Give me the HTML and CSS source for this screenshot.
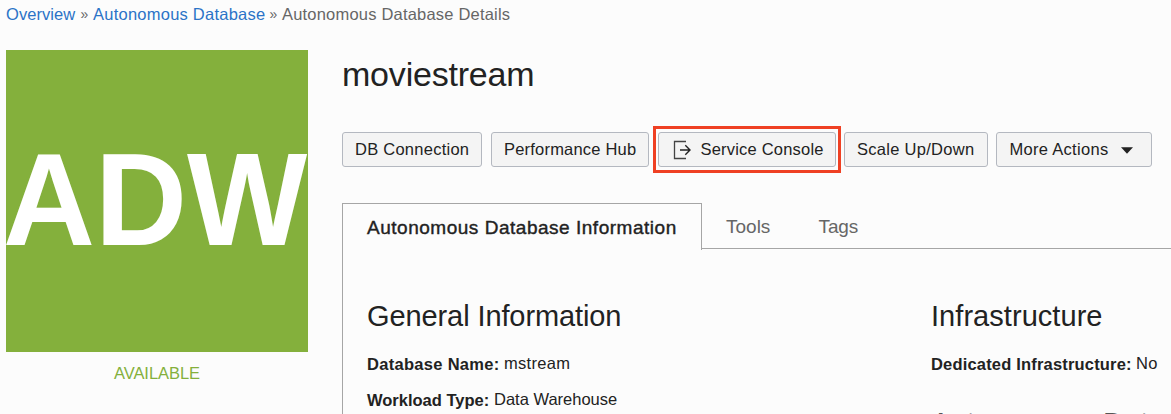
FILE: index.html
```html
<!DOCTYPE html>
<html lang="en">
<head>
<meta charset="utf-8">
<title>Autonomous Database Details</title>
<link rel="stylesheet" href="styles.css">
</head>
<body>
<nav class="breadcrumb">
  <a class="crumb-overview">Overview</a><span class="sep">»</span><a class="crumb-adb">Autonomous Database</a><span class="sep">»</span><span class="crumb-current">Autonomous Database Details</span>
</nav>
<div class="page">
  <aside class="resource">
    <div class="tile"><span class="tile-text">ADW</span></div>
    <div class="status">AVAILABLE</div>
  </aside>
  <main class="content">
    <h1 class="title">moviestream</h1>
    <div class="actions">
      <button class="btn btn-connection">DB Connection</button>
      <button class="btn btn-hub">Performance Hub</button>
      <button class="btn btn-console">
        <svg class="exit-icon" width="18" height="20" viewBox="0 0 18 20"><path d="M13 1.5H1.5v17H13" fill="none" stroke="#444" stroke-width="1.3"/><path d="M7 10h10M12.3 5.3 17 10l-4.7 4.7" fill="none" stroke="#222" stroke-width="1.4"/></svg>
        <span>Service Console</span>
      </button>
      <button class="btn btn-scale">Scale Up/Down</button>
      <button class="btn btn-more"><span>More Actions</span><svg class="caret" width="12" height="7" viewBox="0 0 12 7"><path d="M0 .3h12L6 6.8z" fill="#222"/></svg></button>
    </div>
    <div class="tabs">
      <div class="tab-active">Autonomous Database Information</div>
      <div class="tab-rest"><span class="tab-tools">Tools</span><span class="tab-tags">Tags</span></div>
    </div>
    <div class="panel">
      <section class="general">
        <h2 class="heading heading-general">General Information</h2>
        <div class="row"><b class="k-name">Database Name:</b><span class="v-name">mstream</span></div>
        <div class="row"><b class="k-type">Workload Type:</b><span class="v-type">Data Warehouse</span></div>
      </section>
      <section class="infra">
        <h2 class="heading heading-infra">Infrastructure</h2>
        <div class="row"><b class="k-dedicated">Dedicated Infrastructure:</b><span class="v-dedicated">No</span></div>
        <h2 class="heading heading-guard">Autonomous Data Guard</h2>
      </section>
    </div>
  </main>
</div>
</body>
</html>
```
FILE: styles.css
```css
* { box-sizing: border-box; }
html, body { height: 414px; overflow: hidden; }
body {
  margin: 0;
  display: flex;
  flex-direction: column;
  background: #fcfcfc;
  color: #222;
  font: 16.5px/20px "Liberation Sans", Arial, sans-serif;
  white-space: nowrap;
}
.breadcrumb { display: flex; height: 50px; padding: 4px 0 0 6px; color: #666; flex: none; }
.breadcrumb a { color: #2b73c7; }
.sep { width: 17px; font-size: 14px; text-align: center; }
.crumb-overview { width: 70px; letter-spacing: .05px; }
.crumb-adb { width: 172px; letter-spacing: .24px; }
.crumb-current { letter-spacing: .2px; }
.page { display: flex; height: 364px; padding-left: 6px; gap: 34px; }
.resource { width: 302px; flex: none; }
.tile { height: 302px; background: #84b03c; padding-top: 76px; }
.tile-text {
  display: block;
  width: 302px;
  margin-left: -3px;
  color: #fff;
  font-weight: bold;
  font-size: 132px;
  line-height: 148px;
  transform: scaleX(.965);
  transform-origin: 0 0;
}
.status { padding-top: 11px; text-align: center; color: #84b03c; letter-spacing: -.05px; }
.content { flex: 1; min-width: 0; padding-top: 4px; }
.title { margin: 0; height: 78px; font-size: 34px; line-height: 40px; font-weight: normal; letter-spacing: -.2px; }
.actions { display: flex; height: 35px; }
.btn {
  display: flex;
  align-items: center;
  height: 35px;
  padding: 0 0 1px 12px;
  margin: 0 9px 0 0;
  border: 1px solid #b4b8c0;
  border-radius: 3px;
  background: #f4f4f4;
  color: #222;
  font: inherit;
  line-height: 20px;
  flex: none;
}
.btn-connection { width: 140px; letter-spacing: .25px; }
.btn-hub { width: 158px; letter-spacing: .2px; }
.btn-console { width: 178px; position: relative; letter-spacing: .2px; padding-left: 14px; margin-right: 8px; gap: 9.5px; }
.btn-console::after { content: ""; position: absolute; inset: -7px -6px; border: 3px solid #ef4023; }
.exit-icon { margin-top: 2px; }
.btn-scale { width: 144px; letter-spacing: .28px; margin-right: 8px; }
.btn-more { width: 156px; padding-left: 12.5px; letter-spacing: .3px; gap: 13px; margin-right: 0; }
.caret { margin-top: 2px; }
.tabs { display: flex; height: 46px; margin-top: 36px; }
.tab-active {
  width: 360px;
  height: 47px;
  flex: none;
  padding: 12px 0 0 24px;
  border: 1px solid #a6a6a6;
  border-bottom: 0;
  font-size: 19px;
  line-height: 24px;
  letter-spacing: .52px;
  -webkit-text-stroke: .4px #222;
}
.tab-rest { flex: 1; padding: 12px 0 0 24px; border-bottom: 1px solid #a6a6a6; color: #666; font-size: 19px; line-height: 24px; }
.tab-tools { display: inline-block; width: 92.5px; }
.tab-tags { letter-spacing: -.1px; }
.panel { display: flex; height: 165px; padding: 50px 0 0 24px; border-left: 1px solid #a6a6a6; overflow: hidden; }
.general { width: 564px; flex: none; }
.heading { margin: 0 0 20px; font-weight: normal; font-size: 29px; line-height: 34px; }
.heading-general { letter-spacing: -.1px; }
.heading-infra { letter-spacing: .05px; }
.heading-guard { margin-top: 17px; letter-spacing: .1px; color: #555; }
.row { display: flex; align-items: flex-start; height: 36px; line-height: 20px; }
.row b { padding-top: 1px; flex: none; }
.k-name { width: 137px; letter-spacing: .3px; }
.v-name { letter-spacing: .3px; }
.k-type { width: 127px; }
.k-dedicated { width: 205px; letter-spacing: .18px; }
.v-dedicated { letter-spacing: .4px; }
```
